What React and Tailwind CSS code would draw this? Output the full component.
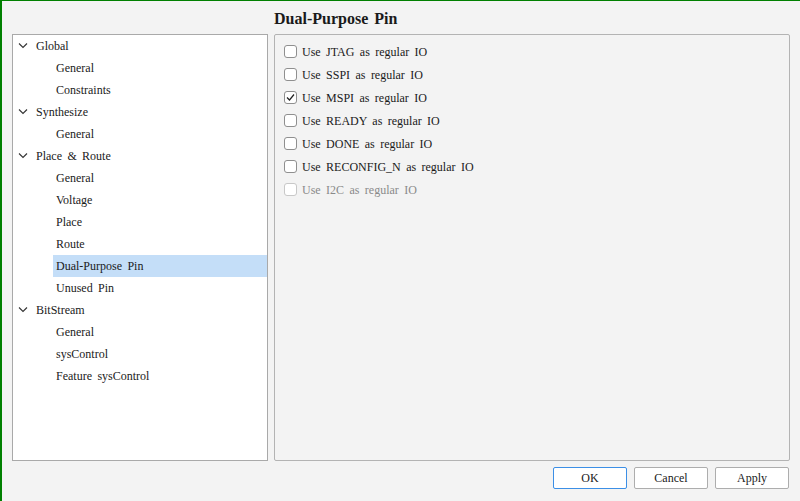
import React from "react";

const tree = [
  { label: "Global", level: 0 },
  { label: "General", level: 1 },
  { label: "Constraints", level: 1 },
  { label: "Synthesize", level: 0 },
  { label: "General", level: 1 },
  { label: "Place & Route", level: 0 },
  { label: "General", level: 1 },
  { label: "Voltage", level: 1 },
  { label: "Place", level: 1 },
  { label: "Route", level: 1 },
  { label: "Dual-Purpose Pin", level: 1, selected: true },
  { label: "Unused Pin", level: 1 },
  { label: "BitStream", level: 0 },
  { label: "General", level: 1 },
  { label: "sysControl", level: 1 },
  { label: "Feature sysControl", level: 1 },
];

const opts = [
  { label: "Use JTAG as regular IO" },
  { label: "Use SSPI as regular IO" },
  { label: "Use MSPI as regular IO", checked: true },
  { label: "Use READY as regular IO" },
  { label: "Use DONE as regular IO" },
  { label: "Use RECONFIG_N as regular IO" },
  { label: "Use I2C as regular IO", disabled: true },
];

function Chevron() {
  return (
    <svg width="10" height="6" viewBox="0 0 10 6" className="shrink-0">
      <path d="M1 0.5 L5 4.5 L9 0.5" fill="none" stroke="#333" strokeWidth="1.1" />
    </svg>
  );
}

export default function App() {
  return (
    <div className="w-[800px] h-[501px] bg-[#f3f3f3] border-t border-l-2 border-[#008000] flex flex-col text-[#1a1a1a] overflow-hidden font-['Liberation_Serif',serif]">
      <div className="h-[33px] flex items-center pl-[272px] text-[16px] font-bold [word-spacing:2px] pt-[2px]">
        Dual-Purpose Pin
      </div>
      <div className="flex gap-[6px] pl-[10px] pr-[10px] h-[427px]">
        <div className="w-[256px] h-full bg-white border border-[#a9a9a9]">
          {tree.map((t, i) => (
            <div key={i} className="h-[22px] flex items-center text-[12px] [word-spacing:2.4px]">
              {t.level === 0 ? (
                <div className="flex items-center pl-[5px]">
                  <Chevron />
                  <span className="ml-[8px]">{t.label}</span>
                </div>
              ) : (
                <div
                  className={
                    "ml-[40px] flex-1 h-full flex items-center pl-[3px] " +
                    (t.selected ? "bg-[#c4def8]" : "")
                  }
                >
                  {t.label}
                </div>
              )}
            </div>
          ))}
        </div>
        <div className="flex-1 h-full border border-[#b3b3b3] rounded-[2px] bg-[#f3f3f3] pt-[5px] pl-[9px]">
          {opts.map((o, i) => (
            <div
              key={i}
              className={
                "h-[23px] flex items-center text-[12px] [word-spacing:2.4px] " +
                (o.disabled ? "text-[#8a8a8a]" : "")
              }
            >
              <div
                className={
                  "w-[13px] h-[13px] rounded-[3px] border bg-white flex items-center justify-center mr-[5px] " +
                  (o.disabled ? "border-[#c8c8c8]" : "border-[#8f8f8f]")
                }
              >
                {o.checked && (
                  <svg width="9" height="9" viewBox="0 0 9 9">
                    <path d="M1 4.5 L3.5 7 L8 1.5" fill="none" stroke="#222" strokeWidth="1.2" />
                  </svg>
                )}
              </div>
              <span>{o.label}</span>
            </div>
          ))}
        </div>
      </div>
      <div className="flex justify-end gap-[7px] pr-[11px] mt-[6px]">
        <button className="w-[74px] h-[22px] bg-white border border-[#3c8fe6] rounded-[2px] text-[12px]">OK</button>
        <button className="w-[74px] h-[22px] bg-white border border-[#adadad] rounded-[2px] text-[12px]">Cancel</button>
        <button className="w-[74px] h-[22px] bg-white border border-[#adadad] rounded-[2px] text-[12px]">Apply</button>
      </div>
    </div>
  );
}
